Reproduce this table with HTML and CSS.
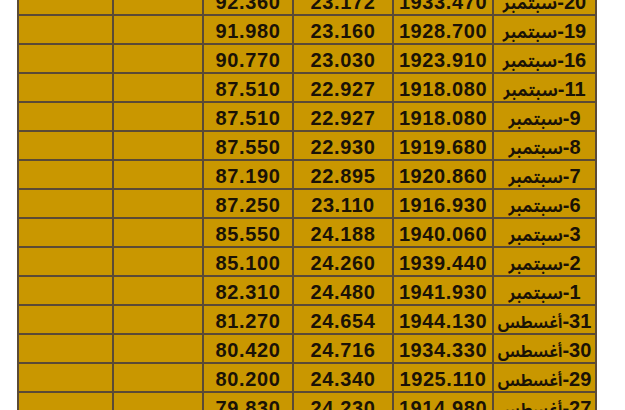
FILE: index.html
```html
<!DOCTYPE html>
<html lang="ar">
<head>
<meta charset="utf-8">
<title>أسعار</title>
<link rel="stylesheet" href="styles.css">
</head>
<body>
<table class="prices">
  <colgroup>
    <col class="c1"><col class="c2"><col class="c3"><col class="c4"><col class="c5"><col class="c6">
  </colgroup>
  <tbody>
    <tr><td></td><td></td><td>92.360</td><td>23.172</td><td>1933.470</td><td class="date" dir="rtl">20-<span class="month">سبتمبر</span></td></tr>
    <tr><td></td><td></td><td>91.980</td><td>23.160</td><td>1928.700</td><td class="date" dir="rtl">19-<span class="month">سبتمبر</span></td></tr>
    <tr><td></td><td></td><td>90.770</td><td>23.030</td><td>1923.910</td><td class="date" dir="rtl">16-<span class="month">سبتمبر</span></td></tr>
    <tr><td></td><td></td><td>87.510</td><td>22.927</td><td>1918.080</td><td class="date" dir="rtl">11-<span class="month">سبتمبر</span></td></tr>
    <tr><td></td><td></td><td>87.510</td><td>22.927</td><td>1918.080</td><td class="date" dir="rtl">9-<span class="month">سبتمبر</span></td></tr>
    <tr><td></td><td></td><td>87.550</td><td>22.930</td><td>1919.680</td><td class="date" dir="rtl">8-<span class="month">سبتمبر</span></td></tr>
    <tr><td></td><td></td><td>87.190</td><td>22.895</td><td>1920.860</td><td class="date" dir="rtl">7-<span class="month">سبتمبر</span></td></tr>
    <tr><td></td><td></td><td>87.250</td><td>23.110</td><td>1916.930</td><td class="date" dir="rtl">6-<span class="month">سبتمبر</span></td></tr>
    <tr><td></td><td></td><td>85.550</td><td>24.188</td><td>1940.060</td><td class="date" dir="rtl">3-<span class="month">سبتمبر</span></td></tr>
    <tr><td></td><td></td><td>85.100</td><td>24.260</td><td>1939.440</td><td class="date" dir="rtl">2-<span class="month">سبتمبر</span></td></tr>
    <tr><td></td><td></td><td>82.310</td><td>24.480</td><td>1941.930</td><td class="date" dir="rtl">1-<span class="month">سبتمبر</span></td></tr>
    <tr><td></td><td></td><td>81.270</td><td>24.654</td><td>1944.130</td><td class="date" dir="rtl">31-<span class="month month-aug">أغسطس</span></td></tr>
    <tr><td></td><td></td><td>80.420</td><td>24.716</td><td>1934.330</td><td class="date" dir="rtl">30-<span class="month month-aug">أغسطس</span></td></tr>
    <tr><td></td><td></td><td>80.200</td><td>24.340</td><td>1925.110</td><td class="date" dir="rtl">29-<span class="month month-aug">أغسطس</span></td></tr>
    <tr><td></td><td></td><td>79.830</td><td>24.230</td><td>1914.980</td><td class="date" dir="rtl">27-<span class="month month-aug">أغسطس</span></td></tr>
  </tbody>
</table>
</body>
</html>
```
FILE: styles.css
```css
html, body {
  margin: 0;
  padding: 0;
  background: #ffffff;
  overflow: hidden;
}

.prices {
  margin: -15px 0 0 17px;
  border-collapse: collapse;
  table-layout: fixed;
  width: 578px;
  background: #c99700;
  font-family: "Liberation Sans", "DejaVu Sans", sans-serif;
  font-weight: bold;
  font-size: 20px;
  color: #1a1206;
}

.c1 { width: 95px; }
.c2 { width: 90px; }
.c3 { width: 90px; }
.c4 { width: 100px; }
.c5 { width: 100px; }
.c6 { width: 103px; }

.prices td {
  border: 2px solid #5a4a36;
  height: 29px;
  padding: 3px 0 0 0;
  box-sizing: border-box;
  text-align: center;
  vertical-align: middle;
  letter-spacing: 0.6px;
  line-height: 23px;
  white-space: nowrap;
}

.prices td.date {
  letter-spacing: 0;
}

.month {
  font-family: "Noto Sans Arabic", "Noto Naskh Arabic", "DejaVu Sans Condensed", "DejaVu Sans", sans-serif;
  font-stretch: condensed;
  font-size: 17px;
  line-height: 1;
}

.month-aug {
  font-size: 16px;
}
```
